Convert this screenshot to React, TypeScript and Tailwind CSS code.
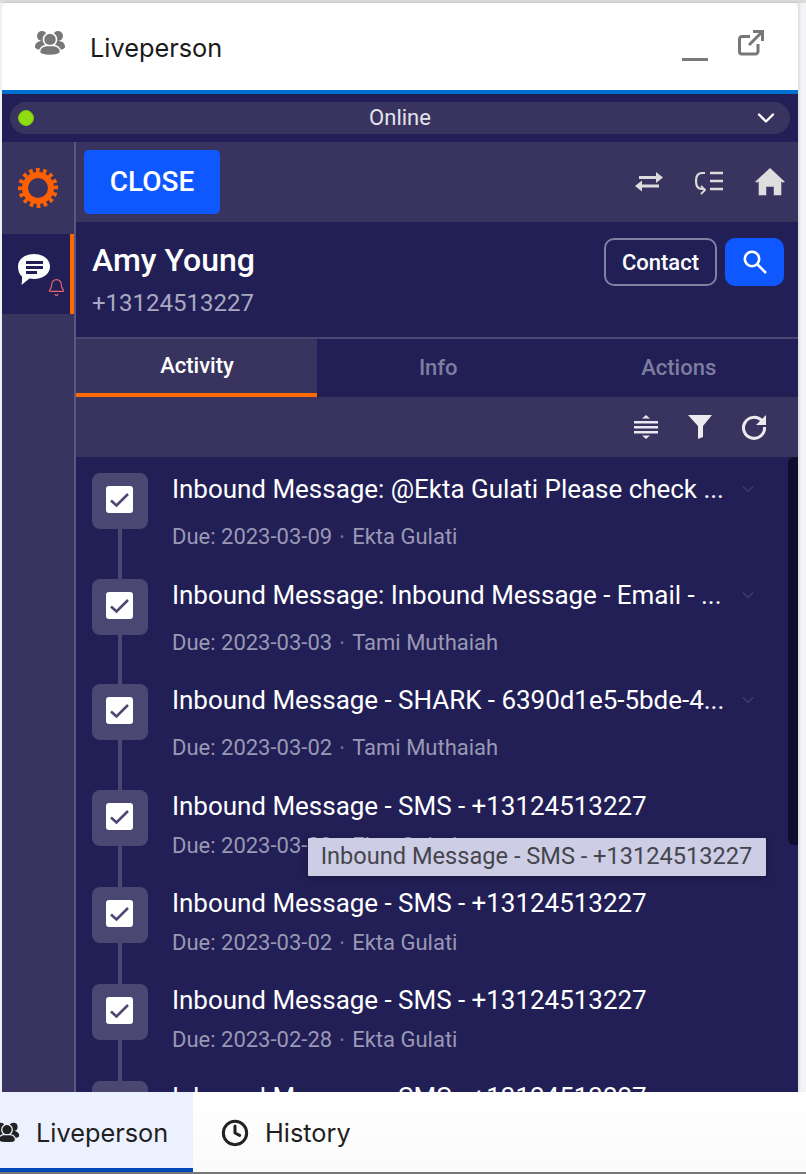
import { Bell, ChevronDown, Clock } from "lucide-react";

const rows = [
  { t: "Inbound Message: @Ekta Gulati Please check ...", d: "2023-03-09", o: "Ekta Gulati", h: "h-[106px]", c: true },
  { t: "Inbound Message: Inbound Message - Email - ...", d: "2023-03-03", o: "Tami Muthaiah", h: "h-[105px]", c: true },
  { t: "Inbound Message - SHARK - 6390d1e5-5bde-4...", d: "2023-03-02", o: "Tami Muthaiah", h: "h-[106px]", c: true },
  { t: "Inbound Message - SMS - +13124513227", d: "2023-03-02", o: "Ekta Gulati", h: "h-[97px]", c: false },
  { t: "Inbound Message - SMS - +13124513227", d: "2023-03-02", o: "Ekta Gulati", h: "h-[97px]", c: false },
  { t: "Inbound Message - SMS - +13124513227", d: "2023-02-28", o: "Ekta Gulati", h: "h-[97px]", c: false },
  { t: "Inbound Message - SMS - +13124513227", d: "2023-02-28", o: "Ekta Gulati", h: "h-[97px]", c: false },
];

function Gear() {
  return (
    <svg width="40" height="40" viewBox="0 0 40 40">
      <circle cx="20" cy="20" r="13" fill="none" stroke="#ff6000" strokeWidth="6" />
      <circle cx="20" cy="20" r="17.5" fill="none" stroke="#ff6000" strokeWidth="5" strokeDasharray="3.6 3.27" transform="rotate(-8 20 20)" />
    </svg>
  );
}

function People({ fill, gap, w, cls }: { fill: string; gap: string; w: number; cls: string }) {
  return (
    <svg className={cls} width={w} height={(w * 26) / 32} viewBox="0 0 32 26">
      <circle cx="8" cy="6" r="5" fill={fill} />
      <circle cx="24" cy="6" r="5" fill={fill} />
      <path d="M1 17 C1 13 4 11 8 11 H24 C28 11 31 13 31 17 C31 19 27 20 24 20 H8 C5 20 1 19 1 17Z" fill={fill} />
      <circle cx="16" cy="9.5" r="6.5" fill={fill} stroke={gap} strokeWidth="1.6" />
      <path d="M5.5 22 C5.5 18 9 15.5 12.5 15.5 H19.5 C23 15.5 26.5 18 26.5 22 C26.5 24 22 25.5 16 25.5 C10 25.5 5.5 24 5.5 22Z" fill={fill} stroke={gap} strokeWidth="1.6" />
    </svg>
  );
}

function Row({ r, last }: { r: (typeof rows)[number]; last: boolean }) {
  return (
    <div className={`relative flex shrink-0 pl-4 ${r.h}`}>
      {!last && <div className="absolute left-[42px] top-[56px] bottom-0 w-[4px] bg-[#4a4772]" />}
      <div className="flex h-14 w-14 shrink-0 items-center justify-center rounded-lg bg-[#4a4772] pb-[3px] pr-[1px]">
        <div className="flex h-[27px] w-[27px] items-center justify-center rounded-[3px] bg-white">
          <svg width="21" height="16" viewBox="0 0 21 16" fill="none">
            <path d="M2 8.5 L7.5 13.5 L19 2" stroke="#4a4772" strokeWidth="2.6" />
          </svg>
        </div>
      </div>
      <div className="ml-6 min-w-0 flex-1">
        <div className="h-[32px] whitespace-nowrap text-[26px] leading-[32px] tracking-[-0.03px] text-white">{r.t}</div>
        <div className={`flex items-center whitespace-nowrap text-[22px] leading-[28px] text-[#9a98b4] ${r.c ? "mt-[18px]" : "mt-[10px]"}`}>
          Due: {r.d}<span className="mx-[8px] text-[12px] text-[#77759a]">•</span>{r.o}
        </div>
      </div>
      {r.c && <ChevronDown className="absolute right-[40px] top-[6px] text-[#3d3a68]" size={20} strokeWidth={2} />}
    </div>
  );
}

export default function App() {
  return (
    <div className="relative flex h-[1174px] w-[806px] flex-col overflow-hidden bg-[#f4f4f6] font-['Roboto',sans-serif]">
      <div className="h-[3px] shrink-0 bg-[#dcdcdc]" />
      <div className="ml-[2px] flex min-h-0 w-[796px] flex-1 flex-col shadow-[1px_0_3px_rgba(0,0,0,0.15)]">
        {/* window header */}
        <div className="flex h-[87px] shrink-0 items-center rounded-t-[6px] bg-white pl-[32px] pr-[33px]">
          <People fill="#777" gap="#fff" w={32} cls="mb-[8px]" />
          <span className="ml-[24px] mt-[3px] font-['Inter',sans-serif] text-[25.3px] leading-[32px] text-[#1a1a1a]">Liveperson</span>
          <div className="mb-[8px] ml-auto flex items-end">
            <div className="mb-[-4px] h-[3px] w-[26px] bg-[#7a7a7a]" />
            <svg className="ml-[29px]" width="28" height="28" viewBox="0 0 28 28" fill="none" stroke="#777" strokeWidth="3">
              <path d="M21 15 V22.5 a2.5 2.5 0 0 1 -2.5 2.5 H5 a2.5 2.5 0 0 1 -2.5 -2.5 V10 a2.5 2.5 0 0 1 2.5 -2.5 H13" />
              <path d="M12 16 L25 3" />
              <path d="M16 2.5 H25.5 V12" />
            </svg>
          </div>
        </div>
        <div className="h-[4px] shrink-0 bg-[#0070d2]" />
        {/* status */}
        <div className="flex h-[48px] shrink-0 items-center bg-[#211f56] px-2">
          <div className="relative flex h-8 flex-1 items-center justify-center rounded-full bg-[#38345f]">
            <div className="absolute left-2 h-4 w-4 rounded-full border border-[#7cc70f] bg-[#8fdc12]" />
            <span className="mb-[1px] text-[22px] leading-[28px] text-[#e4e3ec]">Online</span>
            <ChevronDown className="absolute right-[10px] text-white" size={28} strokeWidth={2} />
          </div>
        </div>
        <div className="flex min-h-0 flex-1">
          {/* sidebar */}
          <div className="w-[72px] shrink-0 bg-[#38345f]">
            <div className="flex h-[92px] items-center justify-center"><Gear /></div>
            <div className="relative flex h-[80px] items-center justify-center border-r-[4px] border-[#ff6a00] bg-[#211f56]">
              <svg className="mb-[10px] mr-[4px]" width="34" height="34" viewBox="0 0 34 34">
                <path fill="#fff" d="M17 2 C26 2 33 7 33 14.5 C33 22 26 27 17 27 C15.5 27 14 26.8 12.5 26.5 C10 28.5 7.5 30.5 4.5 33 C5 30.5 5.2 27.5 5 24.5 C2.5 22.5 1 19 1 14.5 C1 7 8 2 17 2Z" />
                <path fill="#211f56" d="M9 9 H26 V12 H9Z M9 14 H26 V17 H9Z M9 19 H20 V22 H9Z" />
              </svg>
              <Bell className="absolute left-[45px] top-[44px] text-[#e9626f]" size={19} strokeWidth={1.5} />
            </div>
          </div>
          <div className="w-[2px] shrink-0 bg-[#5b587f]" />
          {/* main */}
          <div className="flex min-w-0 flex-1 flex-col bg-[#211f56]">
            <div className="flex h-[80px] shrink-0 items-center bg-[#38345f] pl-2 pr-[12px]">
              <div className="flex h-16 w-[136px] items-center justify-center rounded-[5px] bg-[#0f57ff] text-[28px] font-medium text-white">CLOSE</div>
              <div className="ml-auto flex items-center text-[#dcdcdc]">
                <svg width="30" height="24" viewBox="0 0 30 24" fill="#dcdcdc">
                  <path d="M5 6 H22 V2 L29 7.5 L22 13 V9 H5Z" />
                  <path d="M25 11.5 V14.5 H8 V10.5 L1 16 L8 21.5 V17.5 H25Z" />
                </svg>
                <svg className="ml-[30px]" width="30" height="26" viewBox="0 0 30 26" fill="none" stroke="#dcdcdc" strokeWidth="2.2">
                  <path d="M11 4 H8 C4 4 2 7 2 12 C2 17 4 20 8 20 H11" />
                  <path d="M7 17 L11 21 L7 25" strokeWidth="1.8" />
                  <path d="M16 4 H29 M16 12 H29 M16 20 H29" strokeWidth="2.6" />
                </svg>
                <svg className="ml-[30px]" width="32" height="30" viewBox="0 0 34 30" fill="#dedede">
                  <path d="M17 0 L33 15 L30 15.5 L29 14 V29 H21 V20 H13 V29 H5 V14 L4 15.5 L1 15 Z" />
                </svg>
              </div>
            </div>
            <div className="flex h-[117px] shrink-0 border-b-[2px] border-[#4a4772] pl-4 pr-[14px]">
              <div className="pt-[18px]">
                <div className="text-[32px] font-medium leading-[40px] text-white">Amy Young</div>
                <div className="mt-[7px] text-[24px] leading-[32px] text-[#aaa8c0]">+13124513227</div>
              </div>
              <div className="ml-auto flex gap-2 pt-4">
                <div className="flex h-12 w-[113px] items-center justify-center rounded-[10px] border-[2px] border-[#8280a0] text-[22px] font-medium text-white">Contact</div>
                <div className="flex h-12 w-[59px] items-center justify-center rounded-[10px] bg-[#0f57ff]">
                  <svg width="26" height="26" viewBox="0 0 26 26" fill="none" stroke="#fff" strokeWidth="2.6">
                    <circle cx="10" cy="10" r="7.2" />
                    <path d="M15.5 15.5 L24 24" />
                  </svg>
                </div>
              </div>
            </div>
            <div className="flex h-[58px] shrink-0 text-[22px] font-medium">
              <div className="flex w-[241px] items-center justify-center border-b-[4px] border-[#ff6a00] bg-[#38345f] pb-[1px] pl-[1px] text-white">Activity</div>
              <div className="flex flex-1 items-center justify-center pb-[1px] pl-[2px] text-[#7f7d9e]">Info</div>
              <div className="flex flex-1 items-center justify-center pb-[1px] pl-[2px] text-[#7f7d9e]">Actions</div>
            </div>
            <div className="flex h-[60px] shrink-0 items-center justify-end bg-[#38345f] pr-[31px]">
              <svg width="26" height="26" viewBox="0 0 26 26" fill="#e8e8ee">
                <path d="M13 1 L17 4.5 H9Z M13 25 L9 21.5 H17Z M1 7 H25 V9.5 H1Z M1 12 H25 V14.5 H1Z M1 17 H25 V19.5 H1Z" />
              </svg>
              <svg className="ml-[28px]" width="26" height="26" viewBox="0 0 26 26" fill="#ececf0">
                <path d="M1 1 H25 L16 12 V23 L11 25 V12 Z" />
              </svg>
              <svg className="ml-[28px]" width="26" height="26" viewBox="0 0 26 26" fill="none">
                <path d="M21 7 A10.5 10.5 0 1 0 23.5 13" stroke="#ececf0" strokeWidth="3" />
                <path d="M25 1 V11 H15Z" fill="#ececf0" />
              </svg>
            </div>
            <div className="relative min-h-0 flex-1 overflow-hidden pt-4">
              {rows.map((r, i) => <Row key={i} r={r} last={i === rows.length - 1} />)}
              <div className="absolute right-0 top-0 h-[388px] w-[10px] rounded-bl-[6px] rounded-tl-[6px] bg-[#100e2f]" />
              <div className="absolute left-[232px] top-[381px] flex h-[38px] w-[458px] items-center justify-center whitespace-nowrap rounded-[1px] bg-[#cdcde5] pr-[1px] text-[23.6px] text-[#45454d] shadow-[0_2px_8px_rgba(0,0,0,0.25)]">Inbound Message - SMS - +13124513227</div>
            </div>
          </div>
        </div>
      </div>
      {/* bottom tabs */}
      <div className="z-10 flex h-[80px] shrink-0 bg-gradient-to-b from-white to-[#fafafa] font-['Inter',sans-serif] text-[25.3px] text-[#1f1f1f]">
        <div className="flex w-[193px] items-center border-b-[4px] border-[#0047b8] bg-[#ebf1fe] pt-[5px]">
          <People fill="#222" gap="#ebf1fe" w={26} cls="ml-[-6px]" />
          <span className="ml-[16px]">Liveperson</span>
        </div>
        <div className="flex items-center pl-[28px] pt-[1px]">
          <Clock size={28} strokeWidth={2.6} className="text-[#222]" />
          <span className="ml-[16px]">History</span>
        </div>
      </div>
      <div className="h-[2px] shrink-0 bg-[#777]" />
    </div>
  );
}
